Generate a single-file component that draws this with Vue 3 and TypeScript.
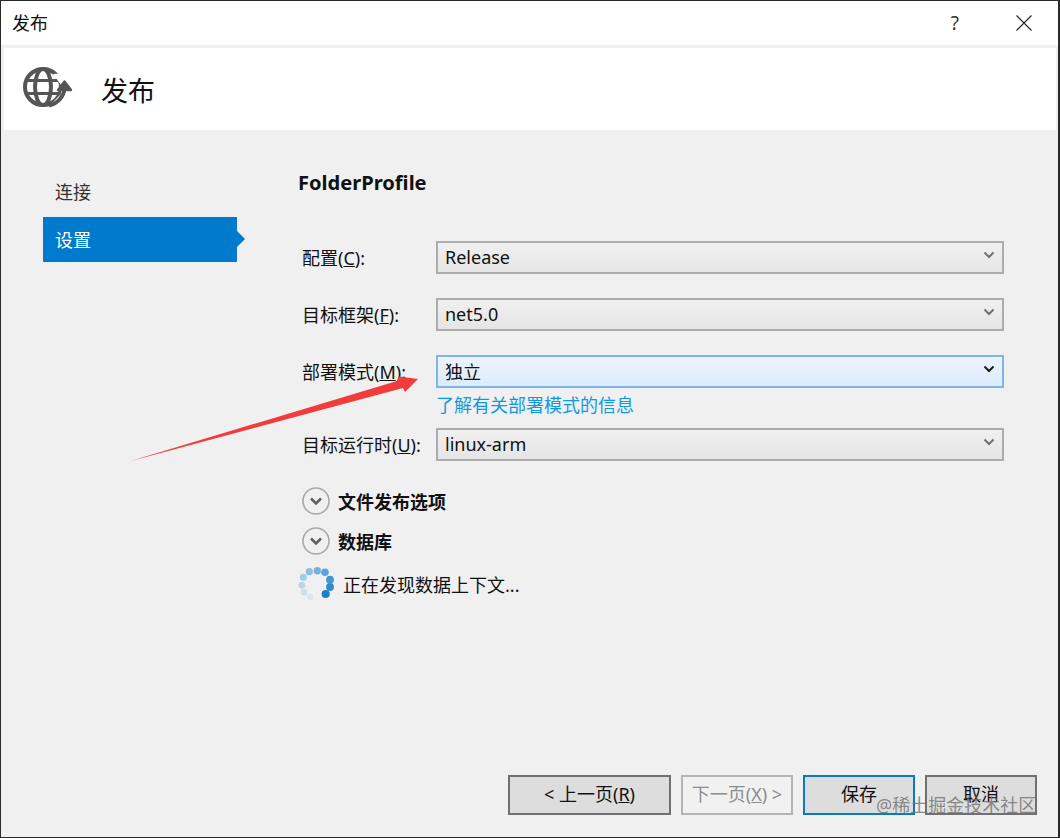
<script setup lang="ts">
interface Field {
  label: string;
  key: string;
  value: string;
  active?: boolean;
  link?: string;
}

const fields: Field[] = [
  { label: "配置(", key: "C", value: "Release" },
  { label: "目标框架(", key: "F", value: "net5.0" },
  { label: "部署模式(", key: "M", value: "独立", active: true, link: "了解有关部署模式的信息" },
  { label: "目标运行时(", key: "U", value: "linux-arm" },
];

const sections: string[] = ["文件发布选项", "数据库"];

const dots = [
  { x: 27.7, y: 27, r: 4.1, c: "#1c80c8" },
  { x: 32, y: 20, r: 3.9, c: "#2f8bcb" },
  { x: 32, y: 12.7, r: 3.9, c: "#4496d0" },
  { x: 27, y: 5.3, r: 3.8, c: "#5fa6d6" },
  { x: 19.3, y: 3.7, r: 3.7, c: "#74b2db" },
  { x: 11.3, y: 4.7, r: 3.6, c: "#8cbfe0" },
  { x: 5.3, y: 10.3, r: 3.5, c: "#a3cbe4" },
  { x: 3.8, y: 18.3, r: 3.4, c: "#b7d5e7" },
  { x: 6, y: 25.3, r: 3.3, c: "#cbdfea" },
  { x: 12, y: 30, r: 3.2, c: "#dde8ee" },
];
</script>

<template>
  <div class="window">
    <div class="titlebar">
      <span class="title">发布</span>
      <span class="help">?</span>
      <svg class="close" width="16" height="16" viewBox="0 0 16 16">
        <path d="M0.5 0.5L15.5 15.5M15.5 0.5L0.5 15.5" stroke="#222" stroke-width="1.1" fill="none" />
      </svg>
    </div>
    <div class="header">
      <svg class="globe" width="60" height="60" viewBox="0 0 60 60">
        <g fill="none" stroke="#555" stroke-width="4">
          <circle cx="23" cy="27" r="18" />
          <ellipse cx="23" cy="27" rx="8" ry="18" />
          <path d="M5 20.5H41M5 33.5H41" stroke-width="3.2" />
        </g>
        <path d="M33 14L41 25V34L32 43L46 46L54 30L46 13Z" fill="#fff" />
        <path d="M44.5 27C44.5 36 38.5 43 29 45.5" fill="none" stroke="#555" stroke-width="4" />
        <path d="M38 30L44.5 21.5L51 30Z" fill="#555" stroke="#555" stroke-width="2.4" stroke-linejoin="round" />
      </svg>
      <h1 class="header-title">发布</h1>
    </div>
    <div class="body">
      <nav class="sidebar">
        <div class="nav-item">连接</div>
        <div class="nav-item selected">设置</div>
      </nav>
      <main class="content">
        <h2 class="profile">FolderProfile</h2>
        <div class="form">
          <div v-for="f in fields" :key="f.key" class="field" :class="{ 'has-link': f.link }">
            <label class="label">{{ f.label }}<u>{{ f.key }}</u>):</label>
            <div class="control">
              <div class="select" :class="{ active: f.active }">
                <span class="value">{{ f.value }}</span>
                <svg width="12" height="8" viewBox="0 0 12 8">
                  <path d="M1.5 1.5L6 6L10.5 1.5" fill="none" :stroke="f.active ? '#1a1a1a' : '#707070'" stroke-width="2" />
                </svg>
              </div>
              <a v-if="f.link" class="link">{{ f.link }}</a>
            </div>
          </div>
        </div>
        <div class="sections">
          <div v-for="s in sections" :key="s" class="section">
            <svg width="28" height="28" viewBox="0 0 28 28">
              <circle cx="14" cy="14" r="13" fill="none" stroke="#a8a8a8" stroke-width="1.6" />
              <path d="M9 11.5L14 16.5L19 11.5" fill="none" stroke="#606060" stroke-width="2.6" />
            </svg>
            <span>{{ s }}</span>
          </div>
        </div>
        <div class="loading">
          <svg width="36" height="34" viewBox="0 0 36 34">
            <circle v-for="(d, i) in dots" :key="i" :cx="d.x" :cy="d.y" :r="d.r" :fill="d.c" />
          </svg>
          <span>正在发现数据上下文...</span>
        </div>
      </main>
    </div>
    <footer class="footer">
      <button class="btn back">&lt; 上一页(<u>R</u>)</button>
      <button class="btn next" disabled>下一页(<u>X</u>) &gt;</button>
      <button class="btn save">保存</button>
      <button class="btn">取消</button>
    </footer>
    <svg class="arrow" width="1060" height="838" viewBox="0 0 1060 838">
      <polygon points="129,461.5 397,381 399,376.5 418,379 405,392 403,388" fill="#f23c3c" />
    </svg>
    <div class="watermark">@稀土掘金技术社区</div>
  </div>
</template>

<style>
html,
body {
  margin: 0;
  background: #f0f0f0;
}
</style>

<style scoped>
.window {
  position: relative;
  box-sizing: border-box;
  width: 1060px;
  height: 838px;
  display: flex;
  flex-direction: column;
  background: #f0f0f0;
  border: 1px solid #2a2a2a;
  border-right-width: 2px;
  border-bottom-width: 1px;
  font-family: "Noto Sans", "Noto Sans CJK SC", sans-serif;
  font-size: 18px;
  color: #111;
  overflow: hidden;
}
.titlebar {
  box-sizing: border-box;
  height: 44px;
  flex: none;
  display: flex;
  align-items: center;
  background: #fff;
  padding: 0 26px 2px 11px;
}
.title {
  font-size: 18px;
  flex: 1;
}
.help {
  font-size: 19px;
  color: #333;
  margin-right: 57px;
  padding-top: 2px;
}
.close {
  display: block;
  margin-top: 2px;
}
.header {
  height: 82px;
  flex: none;
  margin: 3px 2px 0 3px;
  background: #fff;
  display: flex;
  align-items: center;
}
.globe {
  margin: 2px 0 0 16px;
  flex: none;
}
.header-title {
  margin: 0 0 0 21px;
  font-size: 27px;
  font-weight: 400;
  color: #111;
}
.body {
  flex: 1;
  display: flex;
  min-height: 0;
}
.sidebar {
  width: 194px;
  margin-left: 42px;
  padding-top: 40px;
  flex: none;
}
.nav-item {
  position: relative;
  height: 45px;
  line-height: 45px;
  padding-left: 12px;
  margin-bottom: 2px;
  color: #333;
}
.nav-item.selected {
  background: #007acc;
  color: #fff;
  line-height: 47px;
}
.nav-item.selected::after {
  content: "";
  position: absolute;
  left: 100%;
  top: 14px;
  border-left: 8px solid #007acc;
  border-top: 8px solid transparent;
  border-bottom: 8px solid transparent;
}
.content {
  flex: 1;
  padding: 39px 54px 0 61px;
}
.profile {
  margin: 0;
  height: 28px;
  line-height: 28px;
  font-size: 20.1px;
  font-weight: 700;
  color: #111;
}
.form {
  margin-top: 44px;
  padding-left: 4px;
}
.field {
  display: flex;
  align-items: flex-start;
  margin-bottom: 24px;
}
.field.has-link {
  margin-bottom: 10px;
}
.label {
  width: 134px;
  height: 33px;
  flex: none;
  line-height: 34px;
  white-space: nowrap;
}
.control {
  flex: 1;
  min-width: 0;
}
.select {
  box-sizing: border-box;
  height: 33px;
  display: flex;
  align-items: center;
  justify-content: space-between;
  padding: 0 7px 2px 7px;
  border: 2px solid #acacac;
  background: linear-gradient(#f0f0f0, #e5e5e5);
  font-size: 18px;
}
.select svg {
  margin-top: -3px;
}
.select.active {
  border-color: #7eb4ea;
  background: linear-gradient(#ecf4fc, #dcecfc);
}
.link {
  display: block;
  margin-top: 5px;
  height: 25px;
  line-height: 25px;
  color: #0e9ae0;
  white-space: nowrap;
}
.sections {
  margin-top: 26px;
  padding-left: 4px;
}
.section {
  display: flex;
  align-items: center;
  gap: 8px;
  height: 28px;
  margin-bottom: 12px;
  font-weight: 700;
  color: #111;
}
.section svg {
  flex: none;
}
.loading {
  display: flex;
  align-items: center;
  gap: 9px;
  margin-top: 0;
}
.loading svg {
  flex: none;
}
.footer {
  flex: none;
  display: flex;
  justify-content: flex-end;
  gap: 10px;
  height: 40px;
  padding: 0 21px 22px 0;
}
.btn {
  box-sizing: border-box;
  width: 112px;
  height: 40px;
  margin: 0;
  padding: 0 0 4px;
  border: 2px solid #707070;
  background: #dddddd;
  font: inherit;
  color: #111;
}
.btn.back {
  width: 163px;
}
.btn.next {
  border-color: #b4b4b4;
  background: #f1f1f1;
  color: #8c8c8c;
}
.btn.save {
  border-color: #0a7ac4;
}
.arrow {
  position: absolute;
  left: -1px;
  top: -1px;
  pointer-events: none;
}
.watermark {
  position: absolute;
  left: 875px;
  top: 791px;
  font-size: 18px;
  line-height: 26px;
  color: rgba(110, 110, 110, 0.78);
  white-space: nowrap;
  pointer-events: none;
}
</style>
